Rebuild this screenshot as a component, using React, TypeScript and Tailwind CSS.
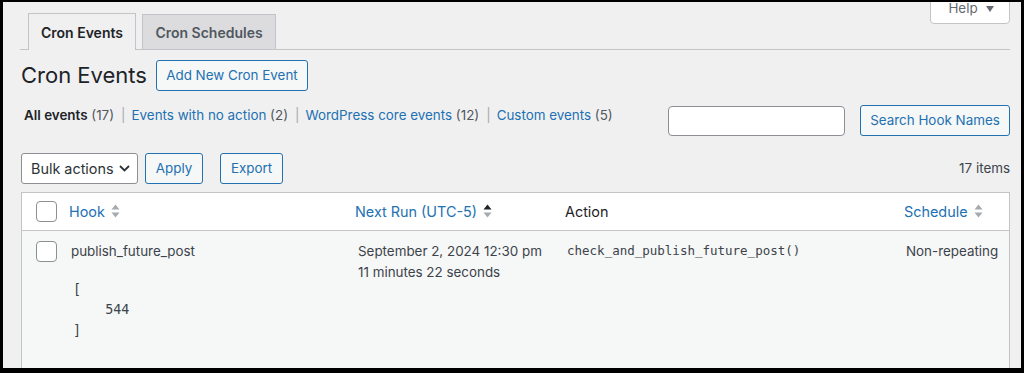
import type { ReactNode } from 'react';

const sans = { fontFamily: 'Inter, "Noto Sans", sans-serif' };
const mono = { fontFamily: '"DejaVu Sans Mono", monospace' };

const SortArrows = ({ active = false }: { active?: boolean }) => (
  <svg width="9" height="16" viewBox="0 0 9 16" className="ml-[6px] shrink-0">
    <path d="M4.5 1.5 L8.5 6.5 H0.5 Z" fill={active ? '#1d2327' : '#a7aaad'} />
    <path d="M4.5 14.5 L8.5 9.5 H0.5 Z" fill="#a7aaad" />
  </svg>
);

const Checkbox = () => (
  <span className="block h-[21px] w-[21px] rounded-[4px] border border-[#8c8f94] bg-white" />
);

const OutlineButton = ({ children, className = '' }: { children: ReactNode; className?: string }) => (
  <button
    type="button"
    className={`flex h-[31px] items-center justify-center rounded-[3px] border border-[#2271b1] bg-[#f6f7f7] text-[13.4px] text-[#2271b1] ${className}`}
  >
    {children}
  </button>
);

const Sep = () => <span className="pl-[7px] pr-[6px] text-[#a7aaad]">|</span>;

export default function App() {
  return (
    <div
      className="h-[373px] w-[1024px] overflow-hidden border-b-[5px] border-l-[3px] border-r-[3px] border-t-2 border-black bg-[#f0f0f1]"
      style={sans}
    >
      <div className="relative pl-[18px] pr-[11px] pt-[11px]">
        {/* help tab */}
        <div className="absolute right-[11px] top-[-6px] flex h-[28px] w-[80px] items-center justify-center gap-[8px] rounded-b-[4px] border border-[#c3c4c7] bg-white pb-[3px] pl-[2px] text-[13.4px] text-[#646970]">
          <span>Help</span>
          <svg width="8" height="6" viewBox="0 0 8 6">
            <path d="M0 0 H8 L4 6 Z" fill="#646970" />
          </svg>
        </div>

        {/* nav tabs */}
        <div className="-ml-[1px] flex h-[37px] items-end gap-[6px] border-b border-[#c3c4c7] pl-[8px]">
          <div className="-mb-px flex h-[37px] w-[108px] items-center justify-center border border-b-0 border-[#c3c4c7] bg-[#f0f0f1] text-[14px] font-semibold text-[#1d2327]">
            Cron Events
          </div>
          <div className="flex h-[35px] w-[134px] items-center justify-center border border-b-0 border-[#c3c4c7] bg-[#dcdcde] text-[14px] font-semibold text-[#50575e]">
            Cron Schedules
          </div>
        </div>

        {/* heading */}
        <div className="mt-[10px] flex items-center">
          <h1 className="text-[22px] font-normal leading-[31px] text-[#1d2327]">Cron Events</h1>
          <OutlineButton className="ml-[9px] w-[152px]">Add New Cron Event</OutlineButton>
        </div>

        {/* filters + search */}
        <div className="mt-[14px] flex items-start justify-between">
          <div className="pl-[3px] text-[13.4px] leading-[20px] text-[#50575e]">
            <span className="font-semibold text-[#1d2327]">All events</span> (17)
            <Sep />
            <span className="text-[#2271b1]">Events with no action</span> (2)
            <Sep />
            <span className="text-[#2271b1]">WordPress core events</span> (12)
            <Sep />
            <span className="text-[#2271b1]">Custom events</span> (5)
          </div>
          <div className="flex items-center gap-[15px]">
            <div className="h-[30px] w-[177px] rounded-[4px] border border-[#8c8f94] bg-white" />
            <OutlineButton className="h-[30px] w-[150px]">Search Hook Names</OutlineButton>
          </div>
        </div>

        {/* bulk actions */}
        <div className="mt-[17px] flex items-center">
          <div className="flex h-[31px] w-[117px] items-center justify-between rounded-[3px] border border-[#8c8f94] bg-white pl-[9px] pr-[7px] text-[14.4px] text-[#2c3338]">
            <span>Bulk actions</span>
            <svg width="11" height="7" viewBox="0 0 11 7">
              <path d="M1 1 L5.5 5.5 L10 1" fill="none" stroke="#2c3338" strokeWidth="1.8" />
            </svg>
          </div>
          <OutlineButton className="ml-[7px] w-[58px]">Apply</OutlineButton>
          <OutlineButton className="ml-[17px] w-[63px]">Export</OutlineButton>
          <span className="ml-auto text-[13.4px] text-[#3c434a]">17 items</span>
        </div>

        {/* table */}
        <div className="mt-[8px] border border-b-0 border-[#c3c4c7]">
          <div className="grid h-[38px] grid-cols-[40px_286px_210px_339px_1fr] items-center border-b border-[#c3c4c7] bg-white text-[14.4px]">
            <div className="pl-[14px]">
              <Checkbox />
            </div>
            <div className="flex items-center pl-[7px] text-[#2271b1]">
              Hook
              <SortArrows />
            </div>
            <div className="flex items-center pl-[7px] text-[#2271b1]">
              Next Run (UTC-5)
              <SortArrows active />
            </div>
            <div className="pl-[7px] text-[#1d2327]">Action</div>
            <div className="flex items-center pl-[7px] text-[#2271b1]">
              Schedule
              <SortArrows />
            </div>
          </div>
          <div className="grid h-[140px] grid-cols-[40px_286px_210px_339px_1fr] bg-[#f6f7f7] pt-[10px] text-[13.4px] leading-[20.5px] text-[#3c434a]">
            <div className="pl-[14px]">
              <Checkbox />
            </div>
            <div className="pl-[9px]">
              <div>publish_future_post</div>
              <pre className="mt-[18px] pl-[2px] text-[13.4px] leading-[20.5px] text-[#3c434a]" style={mono}>
                {'[\n    544\n]'}
              </pre>
            </div>
            <div className="pl-[10px]">
              <div>September 2, 2024 12:30 pm</div>
              <div>11 minutes 22 seconds</div>
            </div>
            <div className="pl-[9px] text-[12.5px]" style={mono}>
              check_and_publish_future_post()
            </div>
            <div className="pl-[9px]">Non-repeating</div>
          </div>
        </div>
      </div>
    </div>
  );
}
